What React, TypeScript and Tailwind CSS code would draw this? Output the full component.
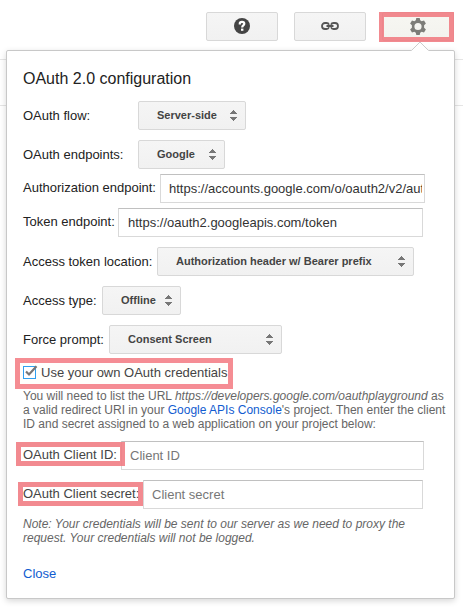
import type { ReactNode } from 'react';

function ToolButton({ children }: { children: ReactNode }) {
  return (
    <button className="flex h-[29px] w-[72px] items-center justify-center rounded-[2px] border border-[#d8d8d8] bg-gradient-to-b from-[#f5f5f5] to-[#f1f1f1]">
      {children}
    </button>
  );
}

function Select({ value, className }: { value: string; className: string }) {
  return (
    <button
      className={`flex h-[29px] shrink-0 items-center justify-between rounded-[2px] border border-[#d8d8d8] bg-gradient-to-b from-[#f5f5f5] to-[#f1f1f1] pr-[8px] pl-[18px] text-[11px] font-bold whitespace-nowrap text-[#444] ${className}`}
    >
      <span>{value}</span>
      <svg width="7" height="11" viewBox="0 0 7 11" fill="#777" shapeRendering="crispEdges">
        <path d="M3 0h1v1h1v1h1v1h1v1H0V3h1V2h1V1h1zM0 7h7v1H6v1H5v1H4v1H3v-1H2V9H1V8H0z" />
      </svg>
    </button>
  );
}

function Field({ value, placeholder, className }: { value?: string; placeholder?: string; className: string }) {
  return (
    <input
      readOnly
      value={value ?? ''}
      placeholder={placeholder}
      className={`h-[29px] shrink-0 border border-[#d9d9d9] border-t-[#c0c0c0] bg-white pr-[2px] pb-px text-[13px] text-[#333] placeholder:text-[#777] ${className}`}
    />
  );
}

function Row({ children, className = '' }: { children: ReactNode; className?: string }) {
  return <div className={`flex h-[29px] items-center ${className}`}>{children}</div>;
}

export default function App() {
  return (
    <div
      className="relative h-[607px] w-[463px] overflow-hidden bg-white text-[13px] leading-[15px] text-[#222]"
      style={{ fontFamily: '"Liberation Sans", Arial, sans-serif' }}
    >
      <div className="absolute top-[59px] left-0 h-[47px] w-full border-y border-[#e5e5e5]" />
      <header className="flex gap-[16px] pt-[12px] pl-[206px]">
        <ToolButton>
          <svg width="16" height="16" viewBox="0 0 16 16" className="-mt-px">
            <circle cx="8" cy="8" r="8" fill="#444" />
            <path d="M5.800 6.400V5.600C5.800 4.300 6.700 3.900 8 3.900s2.300.6 2.300 1.900c0 1.600-2.100 1.600-2.100 3.600" fill="none" stroke="#fff" strokeWidth="2.200" />
            <path d="M7 10.600h2.400v2.200H7z" fill="#fff" />
          </svg>
        </ToolButton>
        <ToolButton>
          <svg width="18" height="8" viewBox="0 0 18 8" fill="none" stroke="#555" strokeWidth="1.800" className="-mt-px">
            <path d="M8 2.800C7.500 1.400 6.600 1 5.500 1H4a3 3 0 0 0 0 6h1.500c1.100 0 2-.4 2.500-1.800M10 2.800C10.500 1.400 11.400 1 12.500 1H14a3 3 0 0 1 0 6h-1.500c-1.100 0-2-.4-2.500-1.800M5.500 4h7" />
          </svg>
        </ToolButton>
        <div className="relative">
          <ToolButton>
            <svg width="16" height="17" viewBox="0 0 16 17" className="-mt-px">
              <path
                fillRule="evenodd"
                fill="#666"
                d="M6.300 0h3.400l.5 2.300 1.500.9 2.300-.8 1.900 3.100-1.800 1.700v2.600l1.800 1.700-1.900 3.100-2.300-.8-1.500.9-.5 2.300H6.300l-.5-2.300-1.500-.9-2.300.8-1.900-3.100 1.800-1.700V7.200L.1 5.500 2 2.400l2.300.8 1.500-.9zM8 4.900a3.600 3.600 0 1 0 0 7.200 3.600 3.600 0 0 0 0-7.200z"
              />
            </svg>
          </ToolButton>
          <div className="absolute top-0 -left-[3px] h-[30px] w-[75px] border-[5px] border-[#f0757c]/85 bg-[#ffffdd]/15" />
        </div>
      </header>

      <main className="relative mt-[9px] ml-[6px] h-[549px] w-[449px] rounded-[2px] border border-[#c8c8c8] bg-white px-[16px] pt-[19px] shadow-[0_2px_6px_rgba(0,0,0,0.16)]">
        <svg width="18" height="10" viewBox="0 0 18 10" className="absolute -top-[10px] left-[404px]">
          <path d="M0 10 9 1l9 9z" fill="#fff" />
          <path d="M.5 9.500 9 1l8.500 8.500" fill="none" stroke="#ccc" />
        </svg>
        <h1 className="text-[16px] leading-[18px]">OAuth 2.0 configuration</h1>
        <Row className="mt-[13px]">
          <span className="w-[115px]">OAuth flow:</span>
          <Select value="Server-side" className="w-[108px]" />
        </Row>
        <Row className="mt-[10px]">
          <span className="w-[115px]">OAuth endpoints:</span>
          <Select value="Google" className="w-[87px]" />
        </Row>
        <Row className="mt-[5px]">
          <span className="w-[137px] pb-[2px]">Authorization endpoint:</span>
          <Field value="https://accounts.google.com/o/oauth2/v2/auth" className="w-[265px] pl-[8px]" />
        </Row>
        <Row className="mt-[5px]">
          <span className="w-[95px] pb-[2px]">Token endpoint:</span>
          <Field value="https://oauth2.googleapis.com/token" className="w-[305px] pl-[9px]" />
        </Row>
        <Row className="mt-[10px]">
          <span className="w-[134px]">Access token location:</span>
          <Select value="Authorization header w/ Bearer prefix" className="w-[257px]" />
        </Row>
        <Row className="mt-[10px]">
          <span className="w-[79px]">Access type:</span>
          <Select value="Offline" className="w-[79px]" />
        </Row>
        <Row className="mt-[10px]">
          <span className="w-[86px]">Force prompt:</span>
          <Select value="Consent Screen" className="w-[173px]" />
        </Row>

        <div className="mt-[4px] -ml-[8px] flex h-[31px] w-[218px] items-center border-[5px] border-[#f58d93] bg-[#fffffc] pb-[2px] pl-[3px] whitespace-nowrap text-[#444]">
          <span className="mr-[5px] block h-[13px] w-[13px] shrink-0 border border-[#2f9ff0] bg-white">
            <svg width="14" height="13" viewBox="0 0 14 13" className="-mt-[2px] max-w-none" fill="none" stroke="#777" strokeWidth="2.200">
              <path d="M2 6.500 5 9.500 12.500 1.200" />
            </svg>
          </span>
          Use your own OAuth credentials
        </div>
        <p className="text-[12px] leading-[14px] whitespace-nowrap text-[#666]">
          You will need to list the URL <i>https://developers.google.com/oauthplayground</i> as
          <br />a valid redirect URI in your <a className="text-[#115cd0]">Google APIs Console</a>'s project. Then enter the client
          <br />
          ID and secret assigned to a web application on your project below:
        </p>

        <Row className="relative mt-[10px] text-[#444]">
          <span className="w-[98px] pb-[2px]">OAuth Client ID:</span>
          <Field placeholder="Client ID" className="w-[303px] pl-[8px]" />
          <div className="absolute top-px -left-[7px] h-[24px] w-[109px] border-[5px] border-[#f0757c]/85" />
        </Row>
        <Row className="relative mt-[10px] text-[#444]">
          <span className="w-[120px] pb-[2px]">OAuth Client secret:</span>
          <Field placeholder="Client secret" className="w-[280px] pl-[8px]" />
          <div className="absolute top-[2px] -left-[5px] h-[24px] w-[125px] border-[5px] border-[#f0757c]/85" />
        </Row>
        <p className="mt-[8px] text-[12px] leading-[14px] whitespace-nowrap text-[#666] italic">
          Note: Your credentials will be sent to our server as we need to proxy the
          <br />
          request. Your credentials will not be logged.
        </p>
        <a className="mt-[21px] block text-[#115cd0]">Close</a>
      </main>
    </div>
  );
}
